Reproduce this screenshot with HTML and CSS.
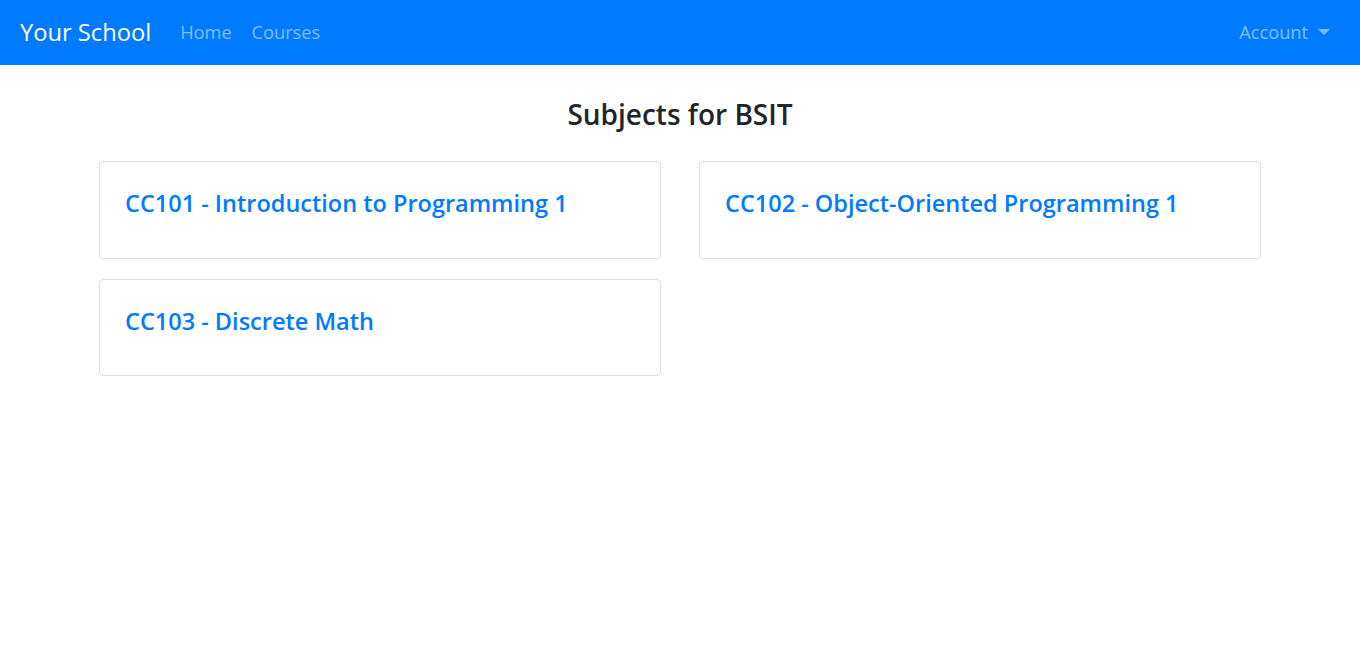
FILE: index.html
```html
<!DOCTYPE html>
<html lang="en">
<head>
<meta charset="utf-8">
<title>Your School</title>
<link rel="stylesheet" href="styles.css">
</head>
<body>
<nav class="navbar">
  <a class="brand" href="#">Your School</a>
  <ul class="nav-links">
    <li><a href="#">Home</a></li>
    <li><a href="#">Courses</a></li>
  </ul>
  <div class="account"><a href="#">Account<span class="caret"></span></a></div>
</nav>
<main class="main">
  <h1 class="page-title">Subjects for BSIT</h1>
  <div class="grid">
    <div class="card"><a class="card-title" href="#">CC101 - Introduction to Programming 1</a></div>
    <div class="card"><a class="card-title" href="#">CC102 - Object-Oriented Programming 1</a></div>
    <div class="card"><a class="card-title" href="#">CC103 - Discrete Math</a></div>
  </div>
</main>
</body>
</html>
```
FILE: styles.css
```css
* { box-sizing: border-box; }
body {
  margin: 0;
  font-family: "Open Sans", "Noto Sans", sans-serif;
  color: #212529;
  background: #fff;
}
a { text-decoration: none; }
.navbar {
  height: 65px;
  background: #007bff;
  display: flex;
  align-items: center;
  padding: 0 16px 2px 20px;
}
.brand {
  color: #fff;
  font-size: 23.7px;
  margin-right: 29px;
}
.nav-links {
  list-style: none;
  display: flex;
  gap: 20px;
  margin: 0;
  padding: 0;
  flex: 1;
}
.nav-links a, .account a {
  color: rgba(255,255,255,.5);
  font-size: 18.2px;
}
.account a { display: flex; align-items: center; margin-right: 14px; }
.caret {
  display: inline-block;
  width: 0; height: 0;
  margin-left: 10px;
  border-top: 6px solid rgba(255,255,255,.5);
  border-left: 6px solid transparent;
  border-right: 6px solid transparent;
}
.main {
  width: 1162px;
  margin: 0 auto;
  padding-top: 28px;
}
.page-title {
  text-align: center;
  font-size: 28px;
  font-weight: 600;
  margin: 0 0 26px;
  line-height: 42px;
}
.grid {
  display: grid;
  grid-template-columns: 1fr 1fr;
  column-gap: 38px;
  row-gap: 20px;
}
.card {
  border: 1px solid rgba(0,0,0,.125);
  border-radius: 4px;
  height: 97.5px;
  padding: 23px 25px;
}
.card-title {
  color: #007bff;
  font-size: 23.5px;
  font-weight: 600;
  line-height: 36px;
}
```
